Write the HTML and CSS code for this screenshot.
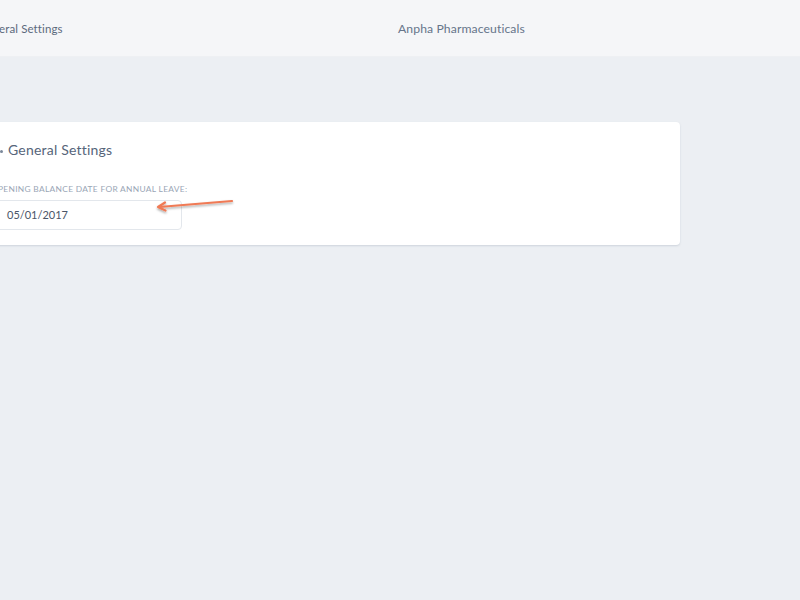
FILE: index.html
```html
<!DOCTYPE html>
<html>
<head>
<meta charset="utf-8">
<link rel="stylesheet" href="styles.css">
</head>
<body>
<header class="topbar">
  <div class="page-title">General Settings</div>
  <div class="company">Anpha Pharmaceuticals</div>
</header>
<main class="content">
  <section class="card">
    <h2 class="card-title"><span class="dot"></span>General Settings</h2>
    <label class="field-label">Opening balance date for annual leave:</label>
    <div class="field-wrap">
      <div class="input">05/01/2017</div>
      <svg class="arrow" width="90" height="24" viewBox="0 0 90 24">
        <defs>
          <filter id="sh" x="-20%" y="-100%" width="140%" height="300%">
            <feDropShadow dx="0" dy="1.5" stdDeviation="1" flood-color="#000" flood-opacity="0.35"/>
          </filter>
        </defs>
        <g filter="url(#sh)" fill="none" stroke="#f07a55" stroke-width="2.2" stroke-linecap="round" stroke-linejoin="round">
          <path d="M80 6 L7 12"/>
          <path d="M13 7.5 L6 12 L13.5 15.5"/>
        </g>
      </svg>
    </div>
  </section>
</main>
</body>
</html>
```

FILE: styles.css
```css
* { box-sizing: border-box; }
html, body { margin: 0; padding: 0; }
body {
  background: #eceff3;
  font-family: "Lato", "Open Sans", sans-serif;
  color: #56657a;
  width: 800px;
  height: 600px;
  overflow: hidden;
}
.topbar {
  height: 57px;
  background: #f5f6f8;
  display: flex;
  align-items: center;
  border-bottom: 1px solid #eef0f3;
}
.page-title {
  margin-left: -22px;
  font-size: 11.5px;
  width: 420px;
  color: #5c6a7d;
  letter-spacing: 0.1px;
}
.company {
  font-size: 12.2px;
  color: #66758a;
  letter-spacing: 0.1px;
}
.content {
  padding-top: 65px;
}
.card {
  margin-left: -24px;
  width: 704px;
  height: 123px;
  background: #fff;
  border-radius: 4px;
  box-shadow: 0 1px 2px rgba(150,160,175,0.35);
  padding: 17px 15px 0 15px;
}
.card-title {
  margin: 0;
  font-weight: 400;
  font-size: 14px;
  color: #56657a;
  display: flex;
  align-items: center;
  height: 20px;
  letter-spacing: 0.2px;
}
.dot {
  width: 3px;
  height: 3px;
  border-radius: 50%;
  background: #7a889a;
  margin-left: 9px;
  margin-right: 5px;
  margin-top: 4px;
}
.field-label {
  display: block;
  margin-top: 25px;
  margin-left: 0;
  font-size: 8.4px;
  text-transform: uppercase;
  letter-spacing: 0.3px;
  color: #9aa6b6;
}
.field-wrap {
  position: relative;
  margin-top: 6px;
}
.input {
  width: 191px;
  height: 30px;
  border: 1px solid #e3e7ec;
  border-radius: 4px;
  font-size: 11px;
  color: #4a5568;
  display: flex;
  align-items: center;
  padding-left: 15px;
  padding-bottom: 1px;
}
.arrow {
  position: absolute;
  left: 161px;
  top: -5px;
}
```
